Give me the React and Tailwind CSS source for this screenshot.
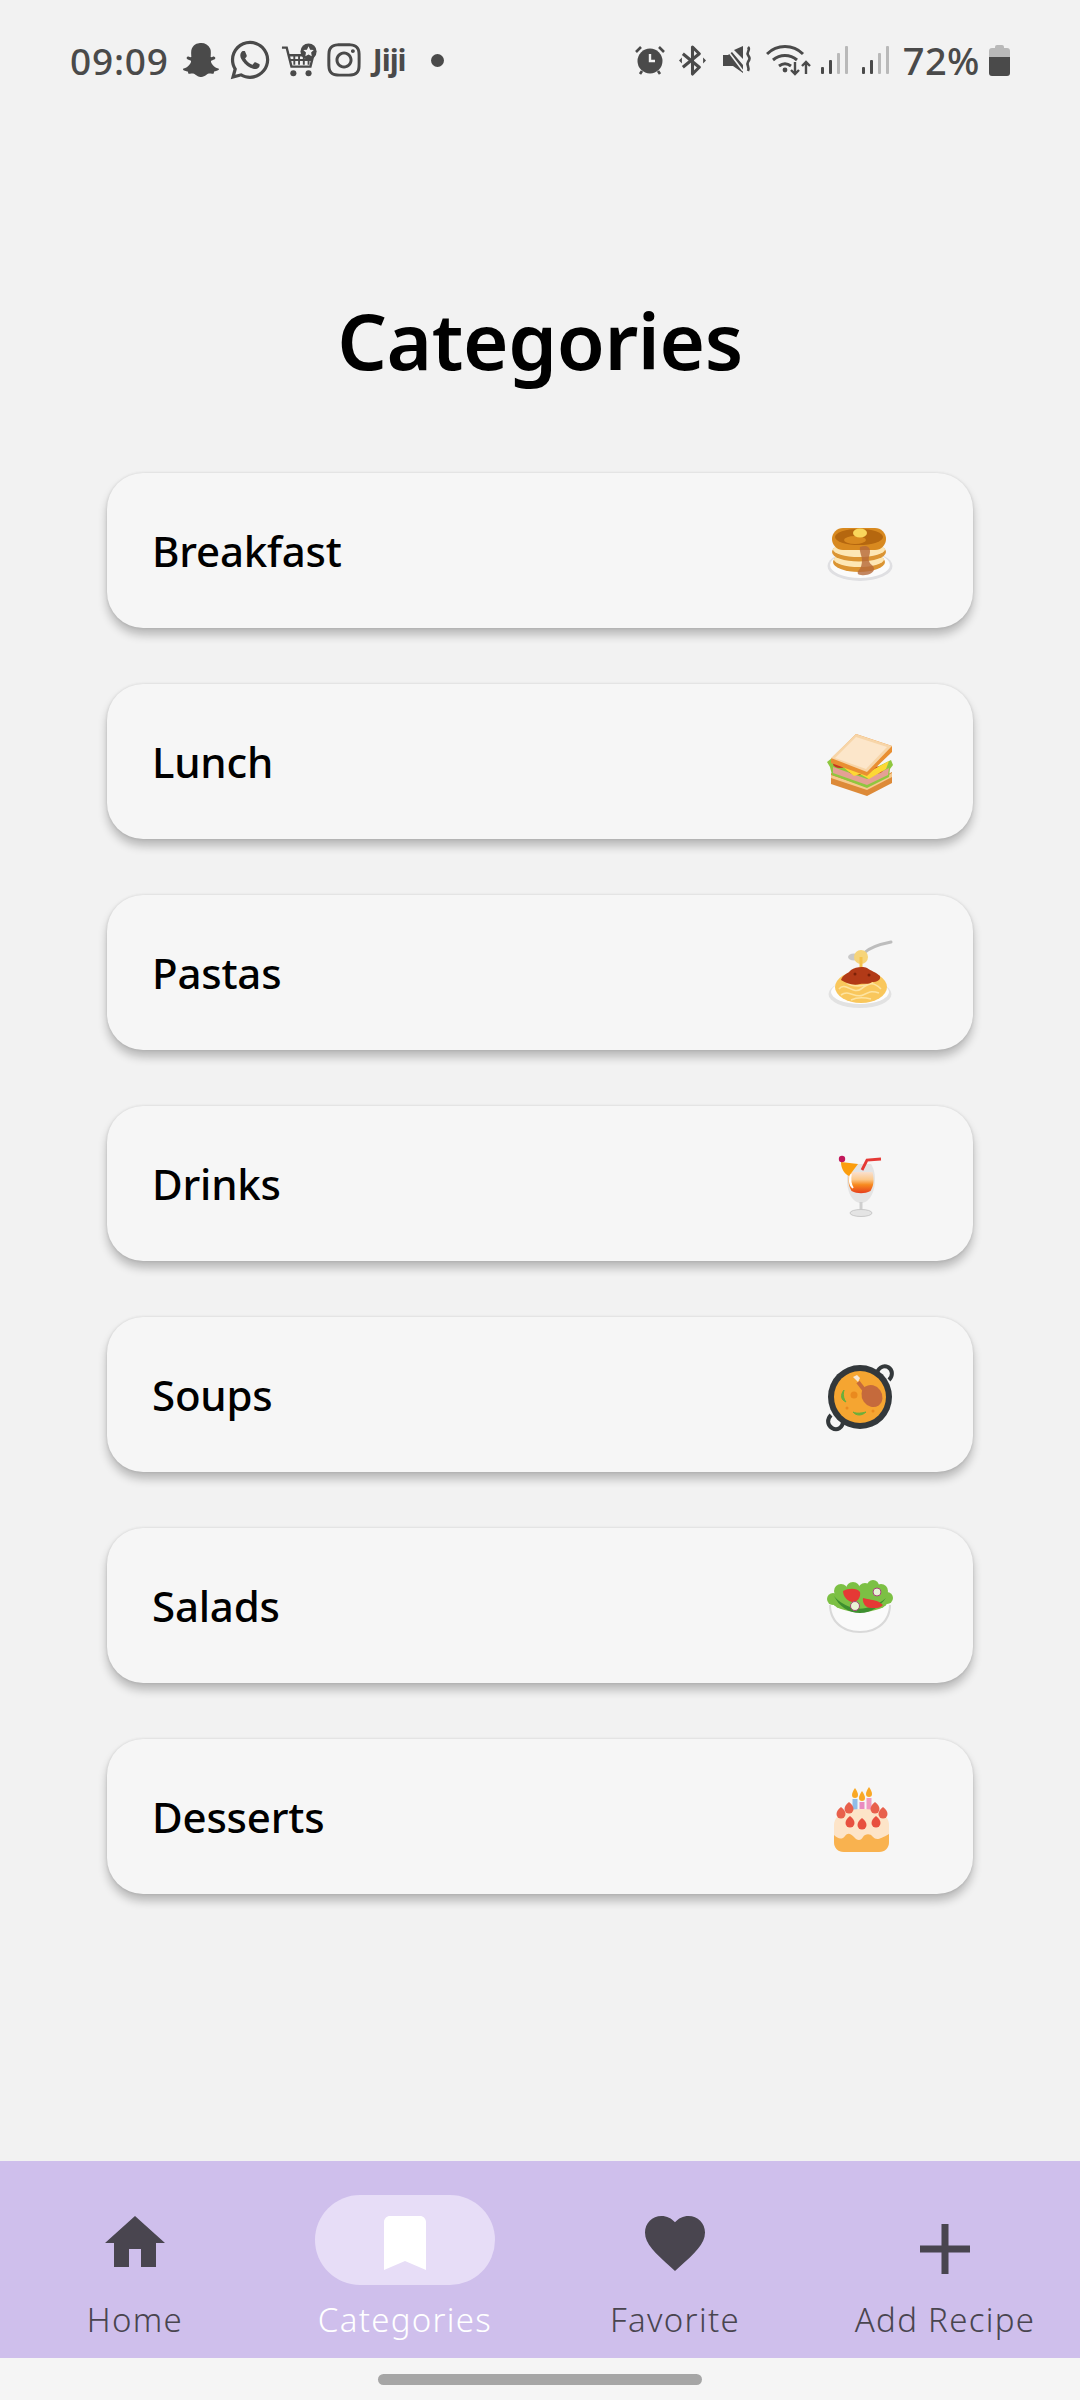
import { FaSnapchatGhost, FaWhatsapp, FaInstagram } from 'react-icons/fa';

const Pancakes = () => (
  <svg viewBox="0 0 66 66" className="w-full h-full overflow-visible">
    <ellipse cx="33" cy="45" rx="32.500" ry="15" fill="#dfdfe2" />
    <ellipse cx="33" cy="44" rx="30" ry="13" fill="#fbfbfb" />
    <ellipse cx="32" cy="41" rx="26" ry="10" fill="#db9432" />
    <ellipse cx="32" cy="38.500" rx="25" ry="7.500" fill="#fde7b5" />
    <ellipse cx="32" cy="31" rx="27" ry="9.500" fill="#db9432" />
    <ellipse cx="32" cy="28.500" rx="26" ry="7.500" fill="#fde7b5" />
    <rect x="5" y="7" width="54" height="22" rx="11" fill="#d8891f" />
    <ellipse cx="32" cy="16" rx="24" ry="8" fill="#b5670f" />
    <ellipse cx="28" cy="19" rx="11" ry="4" fill="#d8891f" />
    <ellipse cx="33" cy="12" rx="7" ry="4.500" fill="#f9d65c" />
    <path d="M33 26c5-2 10-1 10 4s-2 6-1 10 5 4 5 8-7 7-13 6c-4 0-4-3-2-5s3-6 3-10-3-9-2-13z" fill="#b5693a" opacity=".8" />
  </svg>
);

const Sandwich = () => (
  <svg viewBox="0 0 66 66" className="w-full h-full overflow-visible">
    <path d="M4 41l36 12 25-13v11L40 64 4 52z" fill="#dd8a38" />
    <path d="M4 43l36 12 25-14v4L40 58 4 46z" fill="#f6c98e" />
    <path d="M0 30l5-4 35 14 24-12 2 5-3 4-1 8-22 11-35-13-2-8z" fill="#8fc73f" />
    <path d="M6 35l34 12 22-11-1 7-21 10L6 41z" fill="#e5a094" />
    <ellipse cx="13" cy="32" rx="7" ry="4" fill="#c7361f" />
    <ellipse cx="30" cy="39" rx="8" ry="4" fill="#c7361f" />
    <ellipse cx="50" cy="38" rx="6" ry="3.500" fill="#c7361f" />
    <path d="M10 30l30 11 22-12-3 8-17 10-9-5-6 2z" fill="#fdd835" />
    <path d="M4 27L29 2l36 12v6L40 44 4 31z" fill="#e98f32" />
    <path d="M4 26L29 2l36 12-25 26z" fill="#f7d5a8" />
    <path d="M8 26L29 5l31 10-21 22z" fill="#fce6ca" />
  </svg>
);

const Pasta = () => (
  <svg viewBox="0 0 66 66" className="w-full h-full overflow-visible">
    <ellipse cx="33" cy="51" rx="31.500" ry="14" fill="#e2e2e2" />
    <ellipse cx="33" cy="49" rx="29" ry="12" fill="#fdfdfd" />
    <path d="M37 10C43 4 54 1 64 -1" stroke="#bdbdbd" strokeWidth="3" fill="none" strokeLinecap="round" />
    <ellipse cx="27" cy="14" rx="6" ry="3.500" fill="#c9c9c9" />
    <ellipse cx="34" cy="14" rx="7" ry="7" fill="#f6d47a" />
    <rect x="32.500" y="14" width="3" height="20" fill="#f5c24c" />
    <ellipse cx="34" cy="44" rx="26" ry="16" fill="#f9c75c" />
    <path d="M12 46c6-8 14 6 22 0s12-8 20 0M14 52c8-6 14 4 22 0s10-4 16-2M20 40c6 4 14 4 26 0M24 57c6-3 12-3 20-1" stroke="#fde3a0" strokeWidth="1.600" fill="none" />
    <path d="M14 37c2-6 7-6 10-10 4-3 12-4 16-2 4 3 9 4 13 8 1 4-3 6-8 6-4 3-8 1-12 2-7 2-14-1-19-4z" fill="#b23a17" />
    <circle cx="28" cy="31" r="1.500" fill="#7d2208" />
    <circle cx="42" cy="32" r="1.500" fill="#7d2208" />
  </svg>
);

const Drink = () => (
  <svg viewBox="0 0 66 66" className="w-full h-full overflow-visible">
    <defs>
      <linearGradient id="drink-fill" x1="0" y1="0" x2="0" y2="1">
        <stop offset="0" stopColor="#f9e0cf" />
        <stop offset="0.35" stopColor="#fcc98c" />
        <stop offset="0.6" stopColor="#f78a1f" />
        <stop offset="1" stopColor="#e63e1c" />
      </linearGradient>
    </defs>
    <path d="M20 26c0-9 1-13 3-16h21c2 3 4 8 4 15 0 14-6 24-14 24S20 39 20 26z" fill="#e4e4e4" />
    <path d="M21.500 18h24c2 8 1 14-2 19-6 3-13 3-19 0-3-5-4-12-3-19z" fill="url(#drink-fill)" />
    <path d="M24 20c-1 6 0 11 2 14-4-3-4-10-2-14z" fill="#fff" stroke="#fff" strokeWidth="1.500" />
    <rect x="32.500" y="48" width="3" height="10" fill="#cfcfcf" />
    <ellipse cx="34" cy="59" rx="11" ry="3.500" fill="#e4e4e4" stroke="#c9c9c9" />
    <path d="M14 8l17 2-9 12c-5-2-8-8-8-14z" fill="#fb9d0d" />
    <circle cx="15" cy="5" r="3.200" fill="#c2185b" />
    <path d="M35 16l5-10 14-1" stroke="#e53935" strokeWidth="2.800" fill="none" />
  </svg>
);

const Paella = () => (
  <svg viewBox="0 0 66 66" className="w-full h-full overflow-visible">
    <path d="M50 10c0-7 6-10 11-8 5 3 5 9 1 13" stroke="#33383b" strokeWidth="4" fill="#f6f6f6" />
    <path d="M16 56c0 7-6 10-11 7-5-3-5-9-1-13" stroke="#33383b" strokeWidth="4" fill="#f6f6f6" />
    <circle cx="33" cy="32" r="32" fill="#33383b" />
    <circle cx="33" cy="32" r="26" fill="#f5a531" />
    <ellipse cx="45" cy="31" rx="10" ry="11.500" transform="rotate(-35 45 31)" fill="#c56a3c" />
    <path d="M38 26L31 17" stroke="#c56a3c" strokeWidth="4" />
    <path d="M31 17l-5-5 4-2 3 3z" fill="#f6e7d6" />
    <path d="M17 25c-4 5-3 10 2 12-3-4-3-8-2-12zM26 47c3 4 9 4 13 0-4 1-9 2-13 0z" fill="#6aaf3b" stroke="#6aaf3b" />
    <circle cx="27" cy="30" r="3.500" fill="#ea8a1e" />
    <circle cx="20" cy="43" r="1.500" fill="#ea8a1e" />
    <circle cx="46" cy="46" r="1.500" fill="#ea8a1e" />
  </svg>
);

const Salad = () => (
  <svg viewBox="0 0 66 66" className="w-full h-full overflow-visible">
    <path d="M2 29h62c0 16-12 28-31 28S2 45 2 29z" fill="#d9d9d9" />
    <path d="M4 29h58c0 14-11 26-29 26S4 43 4 29z" fill="#fafafa" />
    <g fill="#7cc044">
      <circle cx="6" cy="23" r="6" />
      <circle cx="14" cy="15" r="7" />
      <circle cx="26" cy="13" r="7" />
      <circle cx="38" cy="14" r="7" />
      <circle cx="46" cy="10" r="6" />
      <circle cx="54" cy="15" r="7" />
      <circle cx="60" cy="22" r="6" />
      <ellipse cx="33" cy="25" rx="28" ry="11" />
    </g>
    <path d="M7 20c5 6 12 10 20 12s20 0 32-10c-6 8-14 15-26 15S12 30 7 20z" fill="#3d8f2f" />
    <path d="M16 15c6-3 14-3 17 1 1 5-2 10-8 10-5-1-9-6-9-11z" fill="#e53935" />
    <path d="M36 22c6 2 10 1 16 4l4 3c-3 4-9 3-12 3-5 0-9-5-8-10z" fill="#e53935" />
    <circle cx="28" cy="30" r="4.500" fill="#e9f3d6" stroke="#a8447a" />
    <circle cx="50" cy="16" r="4" fill="#e9f3d6" stroke="#a8447a" />
  </svg>
);

const Cake = () => (
  <svg viewBox="0 0 66 66" className="w-full h-full overflow-visible">
    <rect x="25.500" y="12" width="5" height="19" fill="#90bde8" />
    <rect x="32.500" y="15" width="5" height="22" fill="#e98bc0" />
    <rect x="39.500" y="11" width="5" height="21" fill="#ef9ac0" />
    <path d="M28 1c2 3 3 5 3 7a3 3 0 0 1-6 0c0-2 1-4 3-7zM35 4c2 3 3 5 3 7a3 3 0 0 1-6 0c0-2 1-4 3-7zM42 0c2 3 3 5 3 7a3 3 0 0 1-6 0c0-2 1-4 3-7z" fill="#f9a825" />
    <path d="M7 38c0-10 12-16 28-16s27 6 27 16v17c0 6-4 10-10 10H17c-6 0-10-4-10-10z" fill="#fde4c8" />
    <path d="M7 48c4 4 8 5 11 1 3-4 6-2 9 1 3 4 7 4 9 0 2-3 7-4 10 0 3 3 6 3 16-3v8c0 6-4 10-10 10H17c-6 0-10-4-10-10z" fill="#f9b24f" />
    {[[14, 26], [56, 26], [22, 21], [48, 21]].map(([x, y]) => (
      <path key={`${x}-${y}`} d={`M${x} ${y - 6}c3 2 4.500 5 4.500 7a4.500 4.500 0 0 1-9 0c0-2 1.500-5 4.500-7z`} fill="#e8604c" />
    ))}
    {[[23, 35], [35, 37], [49, 35]].map(([x, y]) => (
      <path key={`${x}-${y}`} d={`M${x} ${y - 6}c3 2 4.500 5 4.500 7a4.500 4.500 0 0 1-9 0c0-2 1.500-5 4.500-7z`} fill="#e8503f" />
    ))}
  </svg>
);

const CATEGORIES = [
  { name: 'Breakfast', Emoji: Pancakes },
  { name: 'Lunch', Emoji: Sandwich },
  { name: 'Pastas', Emoji: Pasta },
  { name: 'Drinks', Emoji: Drink },
  { name: 'Soups', Emoji: Paella },
  { name: 'Salads', Emoji: Salad },
  { name: 'Desserts', Emoji: Cake },
];

const NAV_ITEMS = [
  { label: 'Home', d: 'M30 60V42h12v18h15V36h9L36 9 6 36h9v24z' },
  { label: 'Categories', d: 'M51 9H21c-3.300 0-6 2.700-6 6v48l21-9 21 9V15c0-3.300-2.700-6-6-6z', active: true },
  { label: 'Favorite', d: 'M36 64l-4.350-3.960C16.200 46.080 6 36.840 6 25.500 6 16.260 13.260 9 22.500 9c5.220 0 10.230 2.430 13.500 6.270C39.270 11.430 44.280 9 49.500 9 58.740 9 66 16.260 66 25.500c0 11.340-10.200 20.580-25.650 34.620z' },
  { label: 'Add Recipe', d: 'M32.500 17h7v21.500h21.500v7H39.500V67h-7V45.500H11v-7h21.500z' },
];

function Cart() {
  return (
    <svg viewBox="0 0 40 36" className="w-[38px] h-[36px] ml-[9px]">
      <path d="M1 5h5l5 20h20l3-12H8" stroke="#4a4a4a" strokeWidth="2.500" fill="none" />
      <path d="M14 13v10M19 13v10M24 13v10M29 13v10M9 18h24" stroke="#4a4a4a" strokeWidth="2" />
      <circle cx="13" cy="32" r="3.200" fill="#4a4a4a" />
      <circle cx="29" cy="32" r="3.200" fill="#4a4a4a" />
      <circle cx="29" cy="9" r="8.500" fill="#4a4a4a" />
      <path d="M29 3.500l1.700 3.600 3.800.5-2.800 2.600.7 3.800-3.400-1.900-3.400 1.900.7-3.800-2.800-2.600 3.800-.5z" fill="#f2f2f2" />
    </svg>
  );
}

function StatusRight() {
  return (
    <div className="flex items-center ml-auto">
      {/* alarm */}
      <svg viewBox="0 0 30 30" className="w-[30px] h-[30px]">
        <circle cx="15" cy="16" r="12.500" fill="#4a4a4a" />
        <path d="M15 9v7h5" stroke="#f2f2f2" strokeWidth="2.400" fill="none" />
        <path d="M1 7l5-5M29 7l-5-5M5 29l2-3M25 29l-2-3" stroke="#4a4a4a" strokeWidth="2.600" />
      </svg>
      {/* bluetooth */}
      <svg viewBox="0 0 28 32" className="w-[27px] h-[31px] ml-[14px]">
        <path d="M4 9l17 14-7 7V2l7 7L4 23" stroke="#4a4a4a" strokeWidth="3.200" fill="none" strokeLinejoin="round" />
        <path d="M0 16l3-3v6zM28 16l-3-3v6z" fill="#4a4a4a" />
      </svg>
      {/* mute */}
      <svg viewBox="0 0 30 30" className="w-[30px] h-[30px] ml-[16px]">
        <path d="M1 10h5l4-3 11 13v8l-10-7H1z" fill="#4a4a4a" />
        <path d="M12 5l9-4v13z" fill="#4a4a4a" />
        <path d="M3 2l18 24" stroke="#f2f2f2" strokeWidth="1.500" />
        <path d="M26 2c3 3-2 5 0 8s2 4 0 7 2 5 0 9" stroke="#4a4a4a" strokeWidth="2.600" fill="none" />
      </svg>
      {/* wifi */}
      <svg viewBox="0 0 46 34" className="w-[46px] h-[34px] ml-[14px]">
        <path d="M1 11c10-10 26-10 36 0M7 17c7-6 17-6 24 0M13 23c4-3 8-3 12 0" stroke="#4a4a4a" strokeWidth="3" fill="none" />
        <circle cx="19" cy="27" r="2.400" fill="#4a4a4a" />
        <path d="M29 19v12M25 27l4 4 4-4M40 31V19M36 23l4-4 4 4" stroke="#4a4a4a" strokeWidth="2.400" fill="none" />
      </svg>
      {/* signal */}
      {[0, 1].map((i) => (
        <svg key={i} viewBox="0 0 27 30" className={`w-[27px] h-[30px] ${i === 0 ? 'ml-[9px]' : 'ml-[14px]'}`}>
          <rect x="0" y="22" width="3" height="7" rx="1" fill="#4a4a4a" />
          <rect x="8" y="15" width="3" height="14" rx="1" fill="#4a4a4a" />
          <rect x="16" y="8" width="3" height="21" rx="1" fill="#b9b9b9" />
          <rect x="24" y="1" width="3" height="28" rx="1" fill="#b9b9b9" />
        </svg>
      ))}
      <span className="ml-[14px] text-[38px] leading-none font-medium text-[#4a4a4a] tracking-[0.5px]">72%</span>
      {/* battery */}
      <svg viewBox="0 0 21 32" className="w-[21px] h-[32px] ml-[9px]">
        <path d="M6 3a2 2 0 0 1 2-2h5a2 2 0 0 1 2 2v1h3a3 3 0 0 1 3 3v6H0V7a3 3 0 0 1 3-3h3z" fill="#b9b9b9" />
        <path d="M0 13h21v16a3 3 0 0 1-3 3H3a3 3 0 0 1-3-3z" fill="#4a4a4a" />
      </svg>
    </div>
  );
}

export default function App() {
  return (
    <div className="h-[2400px] flex flex-col bg-[#f2f2f2] font-['Noto_Sans',sans-serif]">
      {/* Status bar */}
      <div className="h-[120px] flex items-center pl-[70px] pr-[70px] text-[#4a4a4a]">
        <span className="text-[37px] leading-none font-medium tracking-[0.8px]">09:09</span>
        <FaSnapchatGhost className="w-[38px] h-[36px] ml-[13px]" />
        <FaWhatsapp className="w-[44px] h-[44px] ml-[8px]" />
        <Cart />
        <FaInstagram className="w-[38px] h-[38px] ml-[6px]" />
        <span className="ml-[10px] text-[30px] leading-none font-bold tracking-[-1px]">Jiji</span>
        <div className="w-[13px] h-[13px] rounded-full bg-[#4a4a4a] ml-[25px]" />
        <StatusRight />
      </div>

      <h1 className="mt-[170px] text-center text-[78px] leading-[100px] font-semibold tracking-[-0.4px] text-black">Categories</h1>

      {/* Category list */}
      <div className="mt-[83px] mx-[107px] flex flex-col gap-[56px]">
        {CATEGORIES.map(({ name, Emoji }) => (
          <div
            key={name}
            className="h-[155px] flex items-center justify-between pl-[45px] pr-[80px] rounded-[36px] bg-[#f6f6f6] shadow-[0_0_3px_rgba(0,0,0,0.12),0_7px_10px_rgba(0,0,0,0.24)]"
          >
            <span className="text-[42px] font-medium tracking-[-0.2px] text-black">{name}</span>
            <div className="w-[66px] h-[66px] mt-[6px]">
              <Emoji />
            </div>
          </div>
        ))}
      </div>

      <div className="flex-1" />

      {/* Bottom nav */}
      <div className="h-[197px] grid grid-cols-4 bg-[#cfbfec] pt-[34px]">
        {NAV_ITEMS.map((item) => (
          <div key={item.label} className="flex flex-col items-center">
            <div className={`w-[180px] h-[90px] rounded-[45px] flex items-center justify-center ${item.active ? 'bg-[#e7ddf7]' : ''}`}>
              <svg viewBox="0 0 72 72" className="w-[72px] h-[72px] mt-[6px]">
                <path d={item.d} fill={item.active ? '#ffffff' : '#49454f'} />
              </svg>
            </div>
            <span className={`mt-[13px] text-[33px] leading-[44px] font-light tracking-[1.300px] ${item.active ? 'text-white' : 'text-[#49454f]'}`}>
              {item.label}
            </span>
          </div>
        ))}
      </div>

      {/* Home indicator */}
      <div className="h-[42px] flex justify-center pt-[16px] bg-[#f5f5f5]">
        <div className="w-[324px] h-[11px] rounded-full bg-[#a6a6a6]" />
      </div>
    </div>
  );
}
